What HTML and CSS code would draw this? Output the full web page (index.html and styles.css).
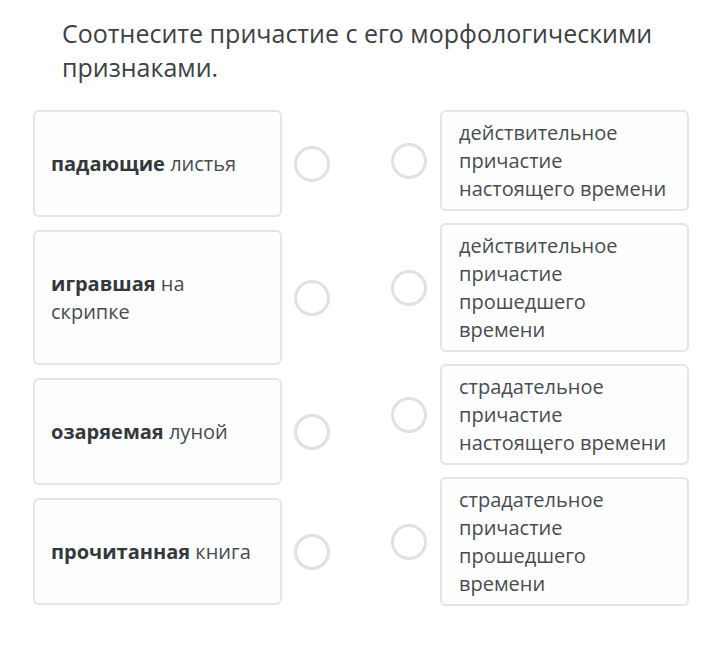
FILE: index.html
```html
<!DOCTYPE html>
<html lang="ru">
<head>
  <meta charset="UTF-8">
  <meta name="viewport" content="width=device-width, initial-scale=1.0">
  <title>Соотнесите причастие</title>
  <link rel="stylesheet" href="styles.css">
</head>
<body>
  <main class="quiz">
    <h1 class="question">Соотнесите причастие с его морфологическими признаками.</h1>

    <div class="match">
      <div class="column column-left">
        <div class="row">
          <div class="card card-left"><b>падающие</b> листья</div>
          <span class="dot"></span>
        </div>
        <div class="row">
          <div class="card card-left"><b>игравшая</b> на скрипке</div>
          <span class="dot"></span>
        </div>
        <div class="row">
          <div class="card card-left"><b>озаряемая</b> луной</div>
          <span class="dot"></span>
        </div>
        <div class="row">
          <div class="card card-left"><b>прочитанная</b> книга</div>
          <span class="dot"></span>
        </div>
      </div>

      <div class="column column-right">
        <div class="row">
          <span class="dot"></span>
          <div class="card card-right">действительное причастие настоящего времени</div>
        </div>
        <div class="row">
          <span class="dot"></span>
          <div class="card card-right">действительное причастие прошедшего времени</div>
        </div>
        <div class="row">
          <span class="dot"></span>
          <div class="card card-right">страдательное причастие настоящего времени</div>
        </div>
        <div class="row">
          <span class="dot"></span>
          <div class="card card-right">страдательное причастие прошедшего времени</div>
        </div>
      </div>
    </div>
  </main>
</body>
</html>
```

FILE: styles.css
```css
* {
  box-sizing: border-box;
  margin: 0;
  padding: 0;
  font-family: 'Open Sans', sans-serif;
}
body {
  background: #ffffff;
  color: #45494d;
}
.quiz {
  padding: 16px 0 0 33px;
}
.question {
  font-size: 25px;
  font-weight: 400;
  line-height: 34px;
  color: #3d4145;
  margin-left: 29px;
  max-width: 620px;
  margin-bottom: 26px;
}
.match {
  display: flex;
  gap: 61px;
}
.column {
  display: flex;
  flex-direction: column;
  gap: 13px;
}
.column-right {
  gap: 12px;
}
.row {
  display: flex;
  align-items: center;
  gap: 12px;
}
.column-right .row {
  gap: 13px;
}
.card {
  width: 249px;
  background: #fefefe;
  border: 2px solid #e2e6e8;
  border-radius: 6px;
  font-size: 20px;
  line-height: 28px;
  color: #484c50;
}
.card b {
  font-weight: 700;
  color: #33383c;
}
.card-left {
  padding: 37.5px 16px;
}
.card-right {
  padding: 6.5px 17px;
}
.dot {
  width: 36px;
  height: 36px;
  border: 3px solid #dde2e4;
  border-radius: 50%;
  flex-shrink: 0;
}
```
